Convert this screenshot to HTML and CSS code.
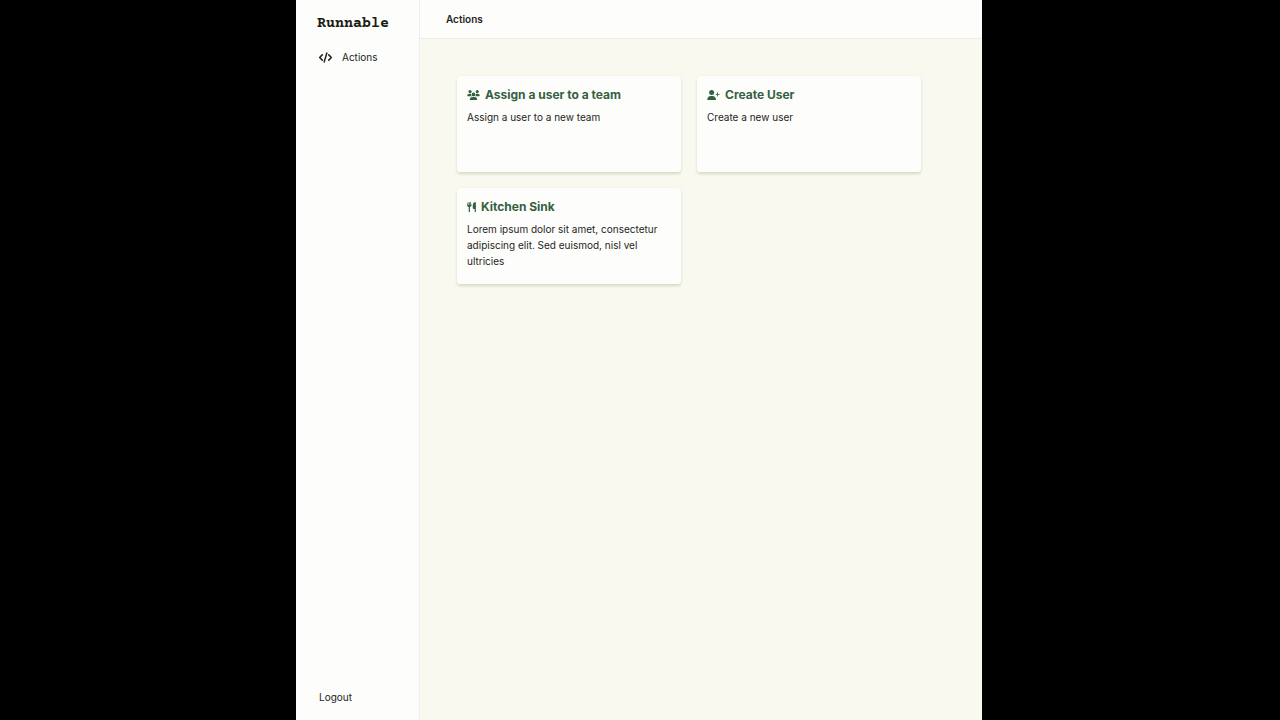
FILE: index.html
```html
<!DOCTYPE html>
<html lang="en">
<head>
<meta charset="utf-8">
<title>Runnable</title>
<link rel="stylesheet" href="styles.css">
</head>
<body>
<div class="app">
  <aside class="sidebar">
    <a class="brand" href="#">Runnable</a>
    <nav>
      <a class="nav-link" href="#">
        <svg class="code-icon" viewBox="0 0 640 512" aria-hidden="true" fill="none" stroke="currentColor" stroke-width="76" stroke-linecap="round" stroke-linejoin="round"><path d="M160 128 32 256l128 128M480 128l128 128-128 128M384 40 256 472"/></svg>
        Actions
      </a>
    </nav>
    <button class="logout" type="button">Logout</button>
  </aside>
  <div class="content">
    <header class="topbar"><h1 class="page-title">Actions</h1></header>
    <main class="cards">
      <a class="card" href="#">
        <h2 class="card-title">
          <svg class="icon-wide" viewBox="0 0 640 512" aria-hidden="true" fill="currentColor"><circle cx="144" cy="80" r="80"/><circle cx="512" cy="80" r="80"/><circle cx="320" cy="224" r="96"/><path d="M0 299c0-59 48-107 107-107h42c16 0 31 4 45 10a128 128 0 0 0 41 118H21c-12 0-21-9-21-21ZM405 320a128 128 0 0 0 41-118c14-6 29-10 45-10h42c59 0 107 48 107 107 0 12-9 21-21 21ZM128 485c0-73 60-133 133-133h118c73 0 133 60 133 133 0 15-12 27-27 27H155c-15 0-27-12-27-27Z"/></svg>
          Assign a user to a team
        </h2>
        <p class="card-text">Assign a user to a new team</p>
      </a>
      <a class="card" href="#">
        <h2 class="card-title">
          <svg class="icon-wide" viewBox="0 0 640 512" aria-hidden="true" fill="currentColor"><circle cx="224" cy="128" r="128"/><path d="M0 482c0-98 80-178 178-178h92c98 0 178 80 178 178 0 17-13 30-30 30H30c-17 0-30-13-30-30ZM504 312v-64h-64a24 24 0 0 1 0-48h64v-64a24 24 0 0 1 48 0v64h64a24 24 0 0 1 0 48h-64v64a24 24 0 0 1-48 0Z"/></svg>
          Create User
        </h2>
        <p class="card-text">Create a new user</p>
      </a>
      <a class="card" href="#">
        <h2 class="card-title">
          <svg class="icon-narrow" viewBox="0 0 448 512" aria-hidden="true" fill="currentColor"><path d="M416 0c-32 0-128 32-128 176v112c0 35 29 64 64 64h32v128a32 32 0 0 0 64 0V32c0-18-14-32-32-32ZM64 16a16 16 0 0 0-32-2L2 148c-1 6-2 12-2 18 0 46 35 84 80 89v225a32 32 0 0 0 64 0V255c45-5 80-43 80-89 0-6-1-12-2-18L192 13a16 16 0 0 0-32 3v134c0 6-4 10-10 10s-10-4-10-9L128 15a16 16 0 0 0-32 0L84 151a10 10 0 0 1-20-1Z"/></svg>
          Kitchen Sink
        </h2>
        <p class="card-text">Lorem ipsum dolor sit amet, consectetur adipiscing elit. Sed euismod, nisl vel ultricies</p>
      </a>
    </main>
  </div>
</div>
</body>
</html>
```
FILE: styles.css
```css
* { box-sizing: border-box; }
body {
  margin: 0;
  background: #000;
  color: #24241c;
  font-family: Inter, "Liberation Sans", sans-serif;
  font-size: 10px;
  line-height: 16px;
  display: grid;
  grid-template-columns: 296fr 686fr 298fr;
}
a { color: inherit; text-decoration: none; }
h1, h2, p { margin: 0; }
.app {
  grid-column: 2;
  display: flex;
  min-height: 100vh;
  background: #f9f9f0;
}
.sidebar {
  flex: 0 0 124px;
  display: flex;
  flex-direction: column;
  background: #fdfdfb;
  border-right: 1px solid #eeeef4;
  padding: 14px 20px 15px;
}
.brand {
  padding-left: 1px;
  font: bold 15px/20px "Courier Prime", "Liberation Mono", monospace;
  color: #1c1c12;
}
.nav-link {
  display: flex;
  align-items: center;
  gap: 10px;
  margin-top: 15px;
  padding-left: 3px;
}
.code-icon { width: 13px; height: 11px; }
.logout {
  margin-top: auto;
  padding: 0 3px;
  border: 0;
  background: none;
  color: inherit;
  font: inherit;
  text-align: left;
}
.content { flex: 1; min-width: 0; }
.topbar {
  padding: 11px 26px;
  background: #fdfdfb;
  border-bottom: 1px solid #efefe6;
}
.page-title { font-size: 10px; line-height: 16px; font-weight: 600; }
.cards {
  display: grid;
  grid-template-columns: 1fr 1fr;
  gap: 16px;
  padding: 37px 61px 36px 37px;
}
.card {
  min-height: 96px;
  padding: 9px 10px 8px;
  background: #fdfdfb;
  border-radius: 3px;
  box-shadow: 0 0 1px #e0e0d0, 0 2px 3px #d9d9c4;
}
.card-title {
  display: flex;
  align-items: center;
  gap: 5px;
  color: #35603f;
  font-size: 12px;
  line-height: 20px;
  font-weight: 700;
}
.icon-wide { width: 13px; height: 10px; }
.icon-narrow { width: 9px; height: 10px; }
.card-text { margin-top: 4px; }
```
